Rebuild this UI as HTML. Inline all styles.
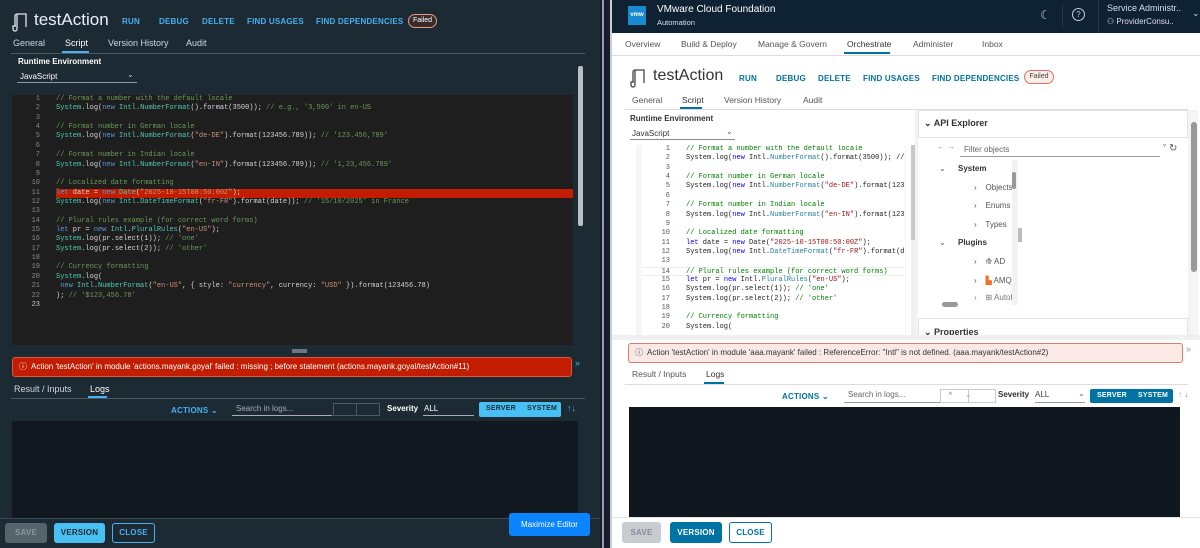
<!DOCTYPE html>
<html><head><meta charset="utf-8"><style>
*{box-sizing:border-box;margin:0;padding:0}
body{width:1200px;height:548px;overflow:hidden;position:relative;font-family:"Liberation Sans",sans-serif;background:#1b2a33}
.a{position:absolute;white-space:nowrap}
.L{left:0;top:0;width:600px;height:548px;background:#1b2a33;position:absolute;color:#e8eef2}
.R{left:612px;top:0;width:588px;height:548px;background:#fff;position:absolute;color:#333}
.btn{font-size:8px;font-weight:bold;letter-spacing:.2px}
.code{font-family:"Liberation Mono",monospace;font-size:7px;line-height:9.36px}
.code div{height:9.36px}
.ln{display:inline-block;width:28px;text-align:right;margin-right:16px}
.cm{color:#6a9955}.kw{color:#569cd6}.st{color:#ce9178}.id{color:#4ec9b0}.pl{color:#d4d4d4}
.R .cm{color:#008000}.R .kw{color:#0000ff}.R .st{color:#a31515}.R .id{color:#267f99}.R .pl{color:#222}
</style></head><body>

<div class="L">
  <svg class="a" style="left:12px;top:12px" width="16" height="20" viewBox="0 0 16 20"><path d="M5 2h9v13M5 2v15a2 2 0 0 1-4 0v-3h3M5 2a2 2 0 0 0-2 2v10M14 15" fill="none" stroke="#dfe6ea" stroke-width="1.3"/></svg>
  <div class="a" style="left:34px;top:10px;font-size:17px;color:#eef">testAction</div>
  <div class="a btn" style="left:122px;top:17px;color:#49aff0">RUN</div>
  <div class="a btn" style="left:159px;top:17px;color:#49aff0">DEBUG</div>
  <div class="a btn" style="left:202px;top:17px;color:#49aff0">DELETE</div>
  <div class="a btn" style="left:247px;top:17px;color:#49aff0">FIND USAGES</div>
  <div class="a btn" style="left:316px;top:17px;color:#49aff0">FIND DEPENDENCIES</div>
  <div class="a" style="left:408px;top:14px;width:29px;height:14px;border:1px solid #e59a8a;border-radius:7px;background:#3a2a2a;font-size:7px;color:#fff;text-align:center;line-height:12px">Failed</div>
  <div class="a" style="left:13px;top:38px;font-size:9px;color:#cfd8dc">General</div>
  <div class="a" style="left:65px;top:38px;font-size:9px;color:#fff">Script</div>
  <div class="a" style="left:62px;top:51px;width:27px;height:2px;background:#49aff0"></div>
  <div class="a" style="left:108px;top:38px;font-size:9px;color:#cfd8dc">Version History</div>
  <div class="a" style="left:186px;top:38px;font-size:9px;color:#cfd8dc">Audit</div>
  <div class="a" style="left:11px;top:53px;width:574px;height:1px;background:#4a5a63"></div>
  <div class="a" style="left:18px;top:57px;font-size:8px;font-weight:bold;color:#fff">Runtime Environment</div>
  <div class="a" style="left:20px;top:72px;font-size:8px;color:#fff">JavaScript</div>
  <div class="a" style="left:127px;top:70px;font-size:8px;color:#ccc">⌄</div>
  <div class="a" style="left:17px;top:82px;width:120px;height:1px;background:#8a9aa3"></div>
  <div class="a" style="left:578px;top:66px;width:5px;height:160px;background:#b8c0c4;border-radius:2px"></div>
  <div class="a code" style="left:12px;top:95px;width:561px;height:250px;background:#1e1e1e;padding-top:0">
    <div><span class="ln" style="color:#888">1</span><span class="cm">// Format a number with the default locale</span></div>
    <div><span class="ln" style="color:#888">2</span><span class="id">System</span><span class="pl">.log(</span><span class="kw">new</span> <span class="id">Intl</span><span class="pl">.</span><span class="id">NumberFormat</span><span class="pl">().format(3500)); </span><span class="cm">// e.g., '3,500' in en-US</span></div>
    <div><span class="ln" style="color:#888">3</span></div>
    <div><span class="ln" style="color:#888">4</span><span class="cm">// Format number in German locale</span></div>
    <div><span class="ln" style="color:#888">5</span><span class="id">System</span><span class="pl">.log(</span><span class="kw">new</span> <span class="id">Intl</span><span class="pl">.</span><span class="id">NumberFormat</span><span class="pl">(</span><span class="st">"de-DE"</span><span class="pl">).format(123456.789)); </span><span class="cm">// '123.456,789'</span></div>
    <div><span class="ln" style="color:#888">6</span></div>
    <div><span class="ln" style="color:#888">7</span><span class="cm">// Format number in Indian locale</span></div>
    <div><span class="ln" style="color:#888">8</span><span class="id">System</span><span class="pl">.log(</span><span class="kw">new</span> <span class="id">Intl</span><span class="pl">.</span><span class="id">NumberFormat</span><span class="pl">(</span><span class="st">"en-IN"</span><span class="pl">).format(123456.789)); </span><span class="cm">// '1,23,456.789'</span></div>
    <div><span class="ln" style="color:#888">9</span></div>
    <div><span class="ln" style="color:#888">10</span><span class="cm">// Localized date formatting</span></div>
    <div style="background:linear-gradient(90deg,#1e1e1e 44px,#c21d00 44px)"><span class="ln" style="color:#888">11</span><span class="kw">let</span><span class="pl"> date = </span><span class="kw">new</span> <span class="id">Date</span><span class="pl">(</span><span class="st">"2025-10-15T08:50:00Z"</span><span class="pl">);</span></div>
    <div><span class="ln" style="color:#888">12</span><span class="id">System</span><span class="pl">.log(</span><span class="kw">new</span> <span class="id">Intl</span><span class="pl">.</span><span class="id">DateTimeFormat</span><span class="pl">(</span><span class="st">"fr-FR"</span><span class="pl">).format(date)); </span><span class="cm">// '15/10/2025' in France</span></div>
    <div><span class="ln" style="color:#888">13</span></div>
    <div><span class="ln" style="color:#888">14</span><span class="cm">// Plural rules example (for correct word forms)</span></div>
    <div><span class="ln" style="color:#888">15</span><span class="kw">let</span><span class="pl"> pr = </span><span class="kw">new</span> <span class="id">Intl</span><span class="pl">.</span><span class="id">PluralRules</span><span class="pl">(</span><span class="st">"en-US"</span><span class="pl">);</span></div>
    <div><span class="ln" style="color:#888">16</span><span class="id">System</span><span class="pl">.log(pr.select(1)); </span><span class="cm">// 'one'</span></div>
    <div><span class="ln" style="color:#888">17</span><span class="id">System</span><span class="pl">.log(pr.select(2)); </span><span class="cm">// 'other'</span></div>
    <div><span class="ln" style="color:#888">18</span></div>
    <div><span class="ln" style="color:#888">19</span><span class="cm">// Currency formatting</span></div>
    <div><span class="ln" style="color:#888">20</span><span class="id">System</span><span class="pl">.log(</span></div>
    <div><span class="ln" style="color:#888">21</span><span class="pl">  </span><span class="kw">new</span> <span class="id">Intl</span><span class="pl">.</span><span class="id">NumberFormat</span><span class="pl">(</span><span class="st">"en-US"</span><span class="pl">, { style: </span><span class="st">"currency"</span><span class="pl">, currency: </span><span class="st">"USD"</span><span class="pl"> }).format(123456.78)</span></div>
    <div><span class="ln" style="color:#888">22</span><span class="pl">); </span><span class="cm">// '$123,456.78'</span></div>
    <div><span class="ln" style="color:#ccc">23</span></div>
  </div>
  <div class="a" style="left:292px;top:349px;width:15px;height:4px;background:#6a777e"></div>
  <div class="a" style="left:12px;top:357px;width:560px;height:20px;background:#c21d00;border:1px solid #e0553c;border-radius:3px;font-size:8px;color:#fff;line-height:18px;padding-left:6px">ⓘ&nbsp; Action 'testAction' in module 'actions.mayank.goyal' failed : missing ; before statement (actions.mayank.goyal/testAction#11)</div>
  <div class="a" style="left:575px;top:358px;font-size:9px;color:#49aff0">»</div>
  <div class="a" style="left:14px;top:384px;font-size:9px;color:#cfd8dc">Result / Inputs</div>
  <div class="a" style="left:90px;top:384px;font-size:9px;color:#fff">Logs</div>
  <div class="a" style="left:88px;top:396px;width:19px;height:2px;background:#49aff0"></div>
  <div class="a" style="left:11px;top:398px;width:574px;height:1px;background:#4a5a63"></div>
  <div class="a btn" style="left:171px;top:406px;color:#49aff0">ACTIONS ⌄</div>
  <div class="a" style="left:236px;top:404px;font-size:8px;color:#aab">Search in logs...</div>
  <div class="a" style="left:232px;top:415px;width:100px;height:1px;background:#aab"></div>
  <div class="a" style="left:333px;top:403px;width:47px;height:13px;border:1px solid #4a5a63"></div>
  <div class="a" style="left:356px;top:403px;width:1px;height:13px;background:#4a5a63"></div>
  <div class="a" style="left:387px;top:404px;font-size:8px;font-weight:bold;color:#fff">Severity</div>
  <div class="a" style="left:424px;top:404px;font-size:8px;color:#fff">ALL</div>
  <div class="a" style="left:423px;top:415px;width:51px;height:1px;background:#aab"></div>
  <div class="a" style="left:479px;top:402px;width:82px;height:15px;background:#49c0f3;border-radius:2px"></div>
  <div class="a btn" style="left:486px;top:405px;color:#1b2a33;font-size:7px">SERVER</div>
  <div class="a btn" style="left:527px;top:405px;color:#1b2a33;font-size:7px">SYSTEM</div>
  <div class="a" style="left:567px;top:403px;font-size:9px;color:#49aff0">↑↓</div>
  <div class="a" style="left:12px;top:421px;width:566px;height:97px;background:#111820"></div>
  <div class="a" style="left:0;top:518px;width:600px;height:1px;background:#3a4a53"></div>
  <div class="a btn" style="left:5px;top:523px;width:42px;height:20px;background:#55636b;border-radius:3px;color:#8a979e;text-align:center;line-height:20px">SAVE</div>
  <div class="a btn" style="left:54px;top:523px;width:51px;height:20px;background:#49c0f3;border-radius:3px;color:#1b2a33;text-align:center;line-height:20px">VERSION</div>
  <div class="a btn" style="left:112px;top:523px;width:43px;height:20px;border:1px solid #49aff0;border-radius:3px;color:#49aff0;text-align:center;line-height:18px">CLOSE</div>
  <div class="a" style="left:509px;top:513px;width:81px;height:23px;background:#0a84ff;border-radius:3px;color:#fff;font-size:8px;text-align:center;line-height:23px">Maximize Editor</div>
</div>

<div class="a" style="left:600px;top:0;width:12px;height:548px;background:#1a1e24"></div>
<div class="a" style="left:602px;top:0;width:2px;height:548px;background:#8aa0c8"></div>
<div class="a" style="left:610px;top:0;width:2px;height:548px;background:#c4cee0"></div>

<div class="R">
  <div class="a" style="left:0;top:0;width:588px;height:33px;background:#0e2233"></div>
  <div class="a" style="left:16px;top:6px;width:18px;height:19px;background:#1a8ad0;color:#fff;font-size:6px;font-weight:bold;text-align:center;line-height:19px">vmw</div>
  <div class="a" style="left:45px;top:4px;font-size:10px;color:#fff">VMware Cloud Foundation</div>
  <div class="a" style="left:45px;top:18px;font-size:7.5px;color:#dde">Automation</div>
  <div class="a" style="left:428px;top:8px;font-size:12px;color:#ccd">☾</div>
  <div class="a" style="left:450px;top:5px;width:1px;height:22px;background:#334"></div>
  <div class="a" style="left:460px;top:8px;width:13px;height:13px;border:1px solid #ccd;border-radius:50%;font-size:8px;color:#ccd;text-align:center;line-height:12px">?</div>
  <div class="a" style="left:486px;top:0px;width:1px;height:33px;background:#334"></div>
  <div class="a" style="left:495px;top:3px;font-size:9px;color:#dde">Service Administr..</div>
  <div class="a" style="left:495px;top:17px;font-size:8px;color:#dde">⚇ ProviderConsu..</div>
  <div class="a" style="left:580px;top:8px;font-size:9px;color:#dde">⌄</div>
  <div class="a" style="left:0;top:55px;width:588px;height:1px;background:#ddd"></div>
  <div class="a" style="left:13px;top:39px;font-size:8.5px;color:#555">Overview</div>
  <div class="a" style="left:69px;top:39px;font-size:8.5px;color:#555">Build &amp; Deploy</div>
  <div class="a" style="left:146px;top:39px;font-size:8.5px;color:#555">Manage &amp; Govern</div>
  <div class="a" style="left:235px;top:39px;font-size:8.5px;color:#333">Orchestrate</div>
  <div class="a" style="left:232px;top:52px;width:46px;height:2px;background:#0072a3"></div>
  <div class="a" style="left:301px;top:39px;font-size:8.5px;color:#555">Administer</div>
  <div class="a" style="left:370px;top:39px;font-size:8.5px;color:#555">Inbox</div>

  <svg class="a" style="left:18px;top:68px" width="16" height="20" viewBox="0 0 16 20"><path d="M5 2h9v13M5 2v15a2 2 0 0 1-4 0v-3h3M5 2a2 2 0 0 0-2 2v10" fill="none" stroke="#444" stroke-width="1.3"/></svg>
  <div class="a" style="left:41px;top:67px;font-size:16px;color:#333">testAction</div>
  <div class="a btn" style="left:127px;top:74px;color:#0072a3">RUN</div>
  <div class="a btn" style="left:164px;top:74px;color:#0072a3">DEBUG</div>
  <div class="a btn" style="left:206px;top:74px;color:#0072a3">DELETE</div>
  <div class="a btn" style="left:251px;top:74px;color:#0072a3">FIND USAGES</div>
  <div class="a btn" style="left:320px;top:74px;color:#0072a3">FIND DEPENDENCIES</div>
  <div class="a" style="left:412px;top:70px;width:30px;height:14px;border:1px solid #e07060;border-radius:7px;background:#fdeee9;font-size:7px;color:#444;text-align:center;line-height:12px">Failed</div>
  <div class="a" style="left:20px;top:95px;font-size:8.5px;color:#555">General</div>
  <div class="a" style="left:70px;top:95px;font-size:8.5px;color:#333">Script</div>
  <div class="a" style="left:68px;top:107px;width:22px;height:2px;background:#0072a3"></div>
  <div class="a" style="left:112px;top:95px;font-size:8.5px;color:#555">Version History</div>
  <div class="a" style="left:191px;top:95px;font-size:8.5px;color:#555">Audit</div>
  <div class="a" style="left:13px;top:109px;width:563px;height:1px;background:#ddd"></div>
  <div class="a" style="left:18px;top:114px;font-size:8px;font-weight:bold;color:#333">Runtime Environment</div>
  <div class="a" style="left:20px;top:129px;font-size:8px;color:#333">JavaScript</div>
  <div class="a" style="left:114px;top:127px;font-size:8px;color:#555">⌄</div>
  <div class="a" style="left:18px;top:139px;width:105px;height:1px;background:#888"></div>
  <div class="a" style="left:24px;top:145px;width:270px;height:190px;background:#f6f6f6"></div>
  <div class="a code" style="left:30px;top:145px;width:263px;height:190px;background:#fff;overflow:hidden">
    <div><span class="ln" style="color:#555">1</span><span class="cm">// Format a number with the default locale</span></div>
    <div><span class="ln" style="color:#555">2</span><span class="pl">System.log(</span><span class="kw">new</span><span class="pl"> Intl.</span><span class="id">NumberFormat</span><span class="pl">().format(3500)); // e.g.,</span></div>
    <div><span class="ln" style="color:#555">3</span></div>
    <div><span class="ln" style="color:#555">4</span><span class="cm">// Format number in German locale</span></div>
    <div><span class="ln" style="color:#555">5</span><span class="pl">System.log(</span><span class="kw">new</span><span class="pl"> Intl.</span><span class="id">NumberFormat</span><span class="pl">(</span><span class="st">"de-DE"</span><span class="pl">).format(123456.789</span></div>
    <div><span class="ln" style="color:#555">6</span></div>
    <div><span class="ln" style="color:#555">7</span><span class="cm">// Format number in Indian locale</span></div>
    <div><span class="ln" style="color:#555">8</span><span class="pl">System.log(</span><span class="kw">new</span><span class="pl"> Intl.</span><span class="id">NumberFormat</span><span class="pl">(</span><span class="st">"en-IN"</span><span class="pl">).format(123456.789</span></div>
    <div><span class="ln" style="color:#555">9</span></div>
    <div><span class="ln" style="color:#555">10</span><span class="cm">// Localized date formatting</span></div>
    <div><span class="ln" style="color:#555">11</span><span class="kw">let</span><span class="pl"> date = </span><span class="kw">new</span><span class="pl"> Date(</span><span class="st">"2025-10-15T08:50:00Z"</span><span class="pl">);</span></div>
    <div><span class="ln" style="color:#555">12</span><span class="pl">System.log(</span><span class="kw">new</span><span class="pl"> Intl.</span><span class="id">DateTimeFormat</span><span class="pl">(</span><span class="st">"fr-FR"</span><span class="pl">).format(date));</span></div>
    <div><span class="ln" style="color:#555">13</span></div>
    <div style="border-top:1px solid #eee;border-bottom:1px solid #eee"><span class="ln" style="color:#555">14</span><span class="cm">// Plural rules example (for correct word forms)</span></div>
    <div><span class="ln" style="color:#555">15</span><span class="kw">let</span><span class="pl"> pr = </span><span class="kw">new</span><span class="pl"> Intl.</span><span class="id">PluralRules</span><span class="pl">(</span><span class="st">"en-US"</span><span class="pl">);</span></div>
    <div><span class="ln" style="color:#555">16</span><span class="pl">System.log(pr.select(1)); </span><span class="cm">// 'one'</span></div>
    <div><span class="ln" style="color:#555">17</span><span class="pl">System.log(pr.select(2)); </span><span class="cm">// 'other'</span></div>
    <div><span class="ln" style="color:#555">18</span></div>
    <div><span class="ln" style="color:#555">19</span><span class="cm">// Currency formatting</span></div>
    <div><span class="ln" style="color:#555">20</span><span class="pl">System.log(</span></div>
  </div>
  <div class="a" style="left:299px;top:145px;width:6px;height:190px;background:#f0f0f0"></div>
  <div class="a" style="left:299px;top:145px;width:6px;height:95px;background:#c8c8c8"></div>
  <div class="a" style="left:190px;top:335px;width:12px;height:5px;background:#c8c8c8"></div>

  <div class="a" style="left:303px;top:110px;width:276px;height:230px;background:#f3f3f3"></div>
  <div class="a" style="left:306px;top:110px;width:270px;height:28px;background:#fff;border:1px solid #e4e4e4"></div>
  <div class="a" style="left:312px;top:118px;font-size:9px;font-weight:bold;color:#333">⌄ API Explorer</div>
  <div class="a" style="left:306px;top:138px;width:270px;height:180px;background:#fff"></div>
  <div class="a" style="left:325px;top:142px;font-size:8px;color:#999">← →</div>
  <div class="a" style="left:352px;top:145px;font-size:8px;color:#666">Filter objects</div>
  <div class="a" style="left:348px;top:156px;width:200px;height:1px;background:#999"></div>
  <div class="a" style="left:551px;top:142px;font-size:6px;color:#555">▿</div>
  <div class="a" style="left:557px;top:143px;font-size:10px;color:#555">↻</div>
  <div class="a" style="left:327px;top:164px;font-size:8px;color:#555">⌄</div>
  <div class="a" style="left:346px;top:164px;font-size:8px;font-weight:bold;color:#333">System</div>
  <div class="a" style="left:362px;top:183px;font-size:8px;color:#555">›&nbsp;&nbsp;&nbsp; Objects</div>
  <div class="a" style="left:362px;top:201px;font-size:8px;color:#555">›&nbsp;&nbsp;&nbsp; Enums</div>
  <div class="a" style="left:362px;top:220px;font-size:8px;color:#555">›&nbsp;&nbsp;&nbsp; Types</div>
  <div class="a" style="left:327px;top:238px;font-size:8px;color:#555">⌄</div>
  <div class="a" style="left:346px;top:238px;font-size:8px;font-weight:bold;color:#333">Plugins</div>
  <div class="a" style="left:362px;top:257px;font-size:8px;color:#555">›&nbsp;&nbsp;&nbsp; ⟰ AD</div>
  <div class="a" style="left:362px;top:276px;font-size:8px;color:#555">›&nbsp;&nbsp;&nbsp; <span style="color:#f07020">▙</span> AMQF</div>
  <div class="a" style="left:362px;top:293px;font-size:8px;color:#777">›&nbsp;&nbsp;&nbsp; ⊞ AutoF</div>
  <div class="a" style="left:400px;top:160px;width:6px;height:145px;background:#f2f2f2"></div>
  <div class="a" style="left:400px;top:172px;width:4px;height:17px;background:#999;border-radius:2px"></div>
  <div class="a" style="left:406px;top:228px;width:4px;height:14px;background:#bbb"></div>
  <div class="a" style="left:330px;top:302px;width:16px;height:5px;background:#999;border-radius:3px"></div>
  <div class="a" style="left:306px;top:318px;width:270px;height:22px;background:#fff;border:1px solid #e4e4e4"></div>
  <div class="a" style="left:312px;top:327px;font-size:9px;font-weight:bold;color:#333">⌄ Properties</div>
  <div class="a" style="left:579px;top:110px;width:7px;height:230px;background:#f5f5f5"></div>
  <div class="a" style="left:579px;top:122px;width:6px;height:150px;background:#999;border-radius:3px"></div>
  <div class="a" style="left:0;top:335px;width:588px;height:5px;background:#f0f0f0"></div>

  <div class="a" style="left:16px;top:343px;width:555px;height:20px;background:#fbe9e6;border:1px solid #e07a6a;border-radius:3px;font-size:8px;color:#333;line-height:18px;padding-left:6px">ⓘ&nbsp; Action 'testAction' in module 'aaa.mayank' failed : ReferenceError: "Intl" is not defined. (aaa.mayank/testAction#2)</div>
  <div class="a" style="left:574px;top:344px;font-size:9px;color:#6aa">»</div>
  <div class="a" style="left:20px;top:369px;font-size:8.5px;color:#555">Result / Inputs</div>
  <div class="a" style="left:94px;top:369px;font-size:8.5px;color:#333">Logs</div>
  <div class="a" style="left:92px;top:382px;width:20px;height:2px;background:#0072a3"></div>
  <div class="a" style="left:13px;top:384px;width:563px;height:1px;background:#ddd"></div>
  <div class="a btn" style="left:170px;top:392px;color:#0072a3">ACTIONS ⌄</div>
  <div class="a" style="left:236px;top:390px;font-size:8px;color:#666">Search in logs...</div>
  <div class="a" style="left:232px;top:402px;width:96px;height:1px;background:#999"></div>
  <div class="a" style="left:328px;top:389px;width:56px;height:14px;border:1px solid #ccc;font-size:7px;color:#666;line-height:12px">&nbsp;&nbsp;&nbsp;&nbsp;^&nbsp;&nbsp;&nbsp;&nbsp;&nbsp;&nbsp;&nbsp;⌄</div>
  <div class="a" style="left:356px;top:389px;width:1px;height:14px;background:#ccc"></div>
  <div class="a" style="left:386px;top:390px;font-size:8px;font-weight:bold;color:#333">Severity</div>
  <div class="a" style="left:423px;top:390px;font-size:8px;color:#444">ALL</div>
  <div class="a" style="left:466px;top:389px;font-size:8px;color:#666">⌄</div>
  <div class="a" style="left:423px;top:402px;width:50px;height:1px;background:#999"></div>
  <div class="a" style="left:478px;top:389px;width:83px;height:14px;background:#0072a3;border-radius:2px"></div>
  <div class="a btn" style="left:485px;top:392px;color:#fff;font-size:7px">SERVER</div>
  <div class="a btn" style="left:526px;top:392px;color:#fff;font-size:7px">SYSTEM</div>
  <div class="a" style="left:566px;top:390px;font-size:8px;color:#6aa">↑ ↓</div>
  <div class="a" style="left:17px;top:407px;width:551px;height:110px;background:#11171e"></div>
  <div class="a" style="left:0;top:517px;width:588px;height:1px;background:#e4e4e4"></div>
  <div class="a btn" style="left:10px;top:522px;width:39px;height:21px;background:#c8cccf;border-radius:3px;color:#889;text-align:center;line-height:21px">SAVE</div>
  <div class="a btn" style="left:58px;top:522px;width:52px;height:21px;background:#0072a3;border-radius:3px;color:#fff;text-align:center;line-height:21px">VERSION</div>
  <div class="a btn" style="left:117px;top:522px;width:43px;height:21px;border:1px solid #0072a3;border-radius:3px;color:#0072a3;text-align:center;line-height:19px">CLOSE</div>
</div>
</body></html>
